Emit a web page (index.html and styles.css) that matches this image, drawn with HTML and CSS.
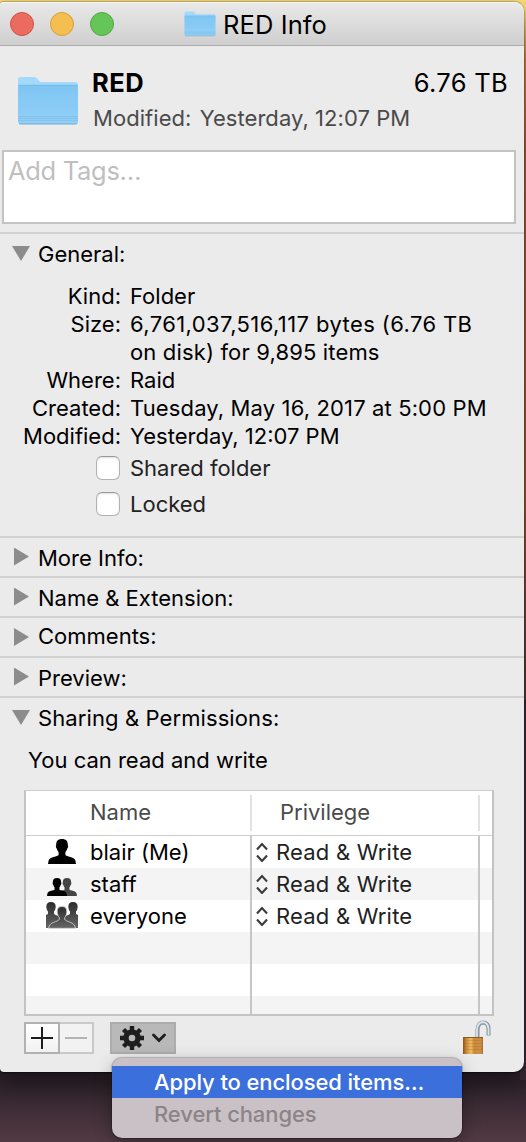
FILE: index.html
```
<!DOCTYPE html>
<html lang="en">
<head>
    <meta charset="UTF-8">
    <meta name="viewport" content="width=device-width, initial-scale=1.0">
    <title>RED Info</title>
    <link rel="stylesheet" href="styles.css">
</head>
<body>
    <!-- shared icons -->
    <svg class="sprite" width="0" height="0">
        <defs>
            <linearGradient id="folderFront" x1="0" y1="0" x2="0" y2="1">
                <stop offset="0" stop-color="#7fc5f3"/>
                <stop offset="1" stop-color="#92d0f8"/>
            </linearGradient>
            <linearGradient id="crowdFill" x1="0" y1="0" x2="0" y2="1">
                <stop offset="0" stop-color="#2c2c2c"/>
                <stop offset="1" stop-color="#666"/>
            </linearGradient>
            <linearGradient id="lockBody" x1="0" y1="0" x2="1" y2="0">
                <stop offset="0" stop-color="#8a4f16"/>
                <stop offset="0.15" stop-color="#c98432"/>
                <stop offset="0.4" stop-color="#efbd68"/>
                <stop offset="0.55" stop-color="#c88a3a"/>
                <stop offset="0.9" stop-color="#cf8f42"/>
                <stop offset="1" stop-color="#a5672a"/>
            </linearGradient>
            <symbol id="folder" viewBox="0 0 62 50">
                <path d="M1 4Q1 1 4 1H17Q19 1 20.500 3L23 6H58Q61 6 61 9V20H1Z" fill="#a3d9fb"/>
                <path d="M1 11Q1 9 3 9H59Q61 9 61 11V45Q61 48 58 48H4Q1 48 1 45Z" fill="url(#folderFront)"/>
                <path d="M1.500 9.300H60.500" stroke="#74b5e2" stroke-width="0.800"/>
                <path d="M1 40.500H61M1 42.500H61M1 44.500H61" stroke="#7ab9e2" stroke-width="0.600"/>
                <path d="M2 47.600Q3 48 4 48H58Q60 48 60.500 47" stroke="#6fa9cf" fill="none"/>
            </symbol>
            <symbol id="person" viewBox="0 0 28 25">
                <path d="M14 0C10 0 8 2 8.200 6C7.600 6.300 7.900 9.500 8.900 9.700C9.300 11.400 10 12.400 10.600 13V16C10 17.600 1.500 17.700 .6 21.500L0 25H28L27.400 21.500C26.500 17.700 18 17.600 17.400 16V13C18 12.400 18.700 11.400 19.100 9.700C20.100 9.500 20.400 6.300 19.800 6C20 2 18 0 14 0Z"/>
            </symbol>
            <symbol id="updown" viewBox="0 0 12 20">
                <path d="M1 7.500L6 2L11 7.500M1 13.500L6 19L11 13.500" fill="none" stroke="#3c3c3c" stroke-width="2.100"/>
            </symbol>
        </defs>
    </svg>

    <div class="window">
        <header class="titlebar">
            <div class="lights">
                <span class="light red"></span>
                <span class="light yellow"></span>
                <span class="light green"></span>
            </div>
            <svg class="title-folder" width="32" height="26"><use href="#folder"/></svg>
            <h1>RED Info</h1>
        </header>

        <div class="summary">
            <svg class="big-folder" width="62" height="50"><use href="#folder"/></svg>
            <div class="summary-text">
                <div class="name-row">
                    <strong>RED</strong>
                    <span class="total">6.76 TB</span>
                </div>
                <div class="modified">Modified: <span class="date">Yesterday, 12:07 PM</span></div>
            </div>
        </div>

        <div class="tags">Add Tags…</div>

        <section class="general">
            <h2 class="open">General:</h2>
            <dl>
                <dt>Kind:</dt><dd>Folder</dd>
                <dt>Size:</dt><dd><span class="bytes">6,761,037,516,117 bytes (6.76 TB</span><br><span class="items">on disk) for 9,895 items</span></dd>
                <dt>Where:</dt><dd>Raid</dd>
                <dt>Created:</dt><dd class="created">Tuesday, May 16, 2017 at 5:00 PM</dd>
                <dt>Modified:</dt><dd>Yesterday, 12:07 PM</dd>
            </dl>
            <div class="check"><span class="box"></span>Shared folder</div>
            <div class="check"><span class="box"></span>Locked</div>
        </section>
        <section class="closed"><h2>More Info:</h2></section>
        <section class="closed"><h2>Name &amp; Extension:</h2></section>
        <section class="closed comments"><h2>Comments:</h2></section>
        <section class="closed"><h2>Preview:</h2></section>

        <section class="sharing">
            <h2 class="open">Sharing &amp; Permissions:</h2>
            <p>You can read and write</p>
            <div class="table">
                <div class="row head">
                    <div class="cell name">Name</div>
                    <div class="cell priv">Privilege</div>
                    <div class="cell"></div>
                </div>
                <div class="row">
                    <div class="cell name">
                        <svg class="who" width="32" height="28"><use href="#person" x="2" y="1" width="28" height="25"/></svg>
                        blair (Me)
                    </div>
                    <div class="cell priv"><svg width="12" height="20"><use href="#updown"/></svg>Read &amp; Write</div>
                    <div class="cell"></div>
                </div>
                <div class="row">
                    <div class="cell name">
                        <svg class="who" width="32" height="28">
                            <use href="#person" x="11" y="8" width="20" height="18" fill="#444"/>
                            <use href="#person" x="1" y="8" width="20" height="18"/>
                        </svg>
                        staff
                    </div>
                    <div class="cell priv"><svg width="12" height="20"><use href="#updown"/></svg>Read &amp; Write</div>
                    <div class="cell"></div>
                </div>
                <div class="row">
                    <div class="cell name">
                        <svg class="who" width="32" height="28">
                            <g fill="url(#crowdFill)">
                                <path d="M5 0Q9.800 0 9.700 5Q9.500 8 8 9.500V12Q10 13.500 13 14V26H0V13L2 12V9.500Q.5 8 .3 5Q.3 0 5 0Z"/>
                                <path d="M27 0Q22.200 0 22.300 5Q22.500 8 24 9.500V12Q22 13.500 19 14V26H32V13L30 12V9.500Q31.500 8 31.700 5Q31.700 0 27 0Z"/>
                                <path d="M16 4.500C12.500 4.500 11 6.500 11.200 10C11.300 12 12 14 13.200 15.500V17.500C12 20 3.500 19.500 2.500 26.300H29.500C28.500 19.500 20 20 18.800 17.500V15.500C20 14 20.700 12 20.800 10C21 6.500 19.500 4.500 16 4.500Z" stroke="#d8d8d8" stroke-width="0.800"/>
                            </g>
                        </svg>
                        everyone
                    </div>
                    <div class="cell priv"><svg width="12" height="20"><use href="#updown"/></svg>Read &amp; Write</div>
                    <div class="cell"></div>
                </div>
                <div class="row"><div class="cell"></div><div class="cell"></div><div class="cell"></div></div>
                <div class="row"><div class="cell"></div><div class="cell"></div><div class="cell"></div></div>
                <div class="row last"><div class="cell"></div><div class="cell"></div><div class="cell"></div></div>
            </div>

            <div class="toolbar">
                <div class="btn add"><svg width="22" height="22"><path d="M0 11H22M11 0V22" stroke="#1c1c1c" stroke-width="2"/></svg></div>
                <div class="btn remove"><svg width="22" height="22"><path d="M0 11H22" stroke="#b4b4b4" stroke-width="2"/></svg></div>
                <div class="btn action">
                    <svg width="24" height="24" viewBox="-12 -12 24 24">
                        <circle r="6" fill="none" stroke="#1e1e1e" stroke-width="5.400"/>
                        <g stroke="#1e1e1e" stroke-width="4.400">
                            <path d="M0 -12V-7M0 12V7M-12 0H-7M12 0H7"/>
                            <path d="M-8.500 -8.500L-5 -5M8.500 8.500L5 5M-8.500 8.500L-5 5M8.500 -8.500L5 -5"/>
                        </g>
                    </svg>
                    <svg width="14" height="10"><path d="M1.500 2L7 7.500L12.500 2" fill="none" stroke="#1e1e1e" stroke-width="2.800" stroke-linecap="round"/></svg>
                    <div class="menu">
                        <div class="item selected">Apply to enclosed items…</div>
                        <div class="item disabled">Revert changes</div>
                    </div>
                </div>
                <svg class="lock" width="28" height="35">
                    <path d="M14.500 18V9.500Q15 2.500 20.500 2.500Q25.500 3 25.500 9V15.500" fill="none" stroke="#8495a0" stroke-width="4"/>
                    <path d="M14 18V9.500Q14.500 2.500 20 2Q25 2.500 25.500 9V15" fill="none" stroke="#dce5ea" stroke-width="1.800"/>
                    <rect x="0" y="17" width="20" height="17" fill="url(#lockBody)"/>
                    <path d="M1 20.500H19M1 23.500H19M1 26.500H19M1 29.500H19" stroke="#a66a25" stroke-width="0.300"/>
                    <path d="M0 17.500H20" stroke="#8d5a20"/>
                </svg>
            </div>
        </section>
    </div>
</body>
</html>
```

FILE: styles.css
```
body {
    font-family: Inter, "Liberation Sans", sans-serif;
    font-size: 22px;
    line-height: 28px;
    margin: 0;
    color: #000;
    height: 1142px;
    overflow: hidden;
    background: linear-gradient(to right, transparent 520px, #3a2a36 520px) 0 700px / 526px 380px no-repeat,
        linear-gradient(to bottom, #f3d972 0, #e8c765 20px, #c97a3a 60px, #a35a30 150px, #96522f 500px, #3a2a36 760px, #2c2129 1080px, #523a44 1142px);
}
h1, h2, p, dl, dd {
    margin: 0;
    font-weight: normal;
    font-size: inherit;
}
.sprite {
    display: block;
}
.window {
    box-sizing: border-box;
    width: 524px;
    height: 1071px;
    margin-top: 1px;
    background-color: #ebebeb;
    border-top: 1px solid #b9a566;
    border-radius: 4px 10px 10px 4px;
    box-shadow: 0 1px 2px rgba(0, 0, 0, 0.6), 0 14px 20px rgba(0, 0, 0, 0.3);
}

/* title bar */
.titlebar {
    box-sizing: border-box;
    display: flex;
    align-items: center;
    height: 44px;
    padding-left: 10px;
    border-bottom: 1px solid #acacac;
    border-radius: 4px 10px 0 0;
    background: linear-gradient(#e9e9e9, #cfcfcf);
    box-shadow: inset 0 1px #f5f5f5;
}
.lights {
    display: flex;
    gap: 16px;
}
.light {
    box-sizing: border-box;
    width: 24px;
    height: 24px;
    border-radius: 50%;
    border: 1px solid;
}
.red {
    background-color: #ec6b60;
    border-color: #cf5148;
}
.yellow {
    background-color: #f4bf50;
    border-color: #d79f3b;
}
.green {
    background-color: #66c558;
    border-color: #50a73f;
}
.title-folder {
    margin: 1px 0 0 70px;
}
.titlebar h1 {
    margin: 3px 0 0 7px;
    font-size: 25.5px;
    letter-spacing: 0.1px;
}

/* name, size and date */
.summary {
    display: flex;
    height: 104px;
    padding: 0 16px 0 17px;
}
.big-folder {
    margin-top: 30px;
}
.summary-text {
    flex: 1;
    margin: 23px 0 0 13px;
}
.name-row {
    display: flex;
    justify-content: space-between;
    font-size: 25.5px;
}
.name-row strong {
    letter-spacing: 0.5px;
}
.total {
    letter-spacing: 0.3px;
}
.modified {
    margin: 7px 0 0 1px;
    color: #4a4a4a;
    letter-spacing: 0.05px;
}
.date {
    margin-left: 2px;
}
.tags {
    box-sizing: border-box;
    width: 514px;
    height: 74px;
    margin: 0 0 8px 2px;
    padding: 5px 4px;
    border: 2px solid #c3c3c3;
    background-color: #fff;
    color: #bfbfbf;
    font-size: 25.5px;
    letter-spacing: -0.3px;
}

/* sections */
section {
    box-sizing: border-box;
    border-top: 2px solid #d2d2d2;
}
h2 {
    display: flex;
    align-items: center;
    height: 38px;
    padding-top: 1px;
    box-sizing: border-box;
}
h2::before {
    content: "";
    width: 15px;
    height: 18px;
    margin: -2px 9px 0 14px;
    background-color: #8c8c8c;
    clip-path: polygon(0 0, 100% 50%, 0 100%);
}
h2.open::before {
    width: 18px;
    height: 15px;
    margin: -1px 8px 0 12px;
    clip-path: polygon(0 0, 100% 0, 50% 100%);
}
.closed {
    height: 40px;
}
.comments h2 {
    height: 35px;
}
.comments h2::before {
    margin-top: 2px;
}
.general {
    height: 304px;
}
.general h2 {
    height: 39px;
}
dl {
    display: grid;
    grid-template-columns: 121px 1fr;
    column-gap: 9px;
    margin: 9px 0 6px;
}
dt {
    text-align: right;
}
dd {
    white-space: nowrap;
}
.bytes {
    letter-spacing: 0.4px;
}
.items {
    letter-spacing: 0.15px;
}
.created {
    letter-spacing: 0.13px;
}
.check {
    display: flex;
    align-items: center;
    height: 24px;
    margin: 0 0 12px 96px;
    color: #222;
}
.box {
    box-sizing: border-box;
    width: 24px;
    height: 24px;
    margin-right: 10px;
    border: 1px solid #b2b2b2;
    border-top-color: #989898;
    border-radius: 6px;
    background-color: #fff;
    box-shadow: inset 0 1px 2px rgba(0, 0, 0, 0.12);
}

/* sharing table */
.sharing h2 {
    height: 39px;
    letter-spacing: 0.1px;
}
.sharing p {
    margin: 9px 0 16px 28px;
}
.table {
    box-sizing: border-box;
    width: 470px;
    height: 226px;
    margin-left: 24px;
    overflow: hidden;
    border: 2px solid #c3c3c3;
    border-top: 1px solid #cdcdcd;
    background-color: #fff;
}
.row {
    display: grid;
    grid-template-columns: 226px 228px 12px;
    height: 32px;
}
.row:nth-child(odd) {
    background-color: #f4f4f4;
}
.cell {
    box-sizing: border-box;
    display: flex;
    align-items: center;
    border-right: 2px solid #c6c6c6;
    white-space: nowrap;
}
.row .cell:last-child {
    border-right: 0;
}
.row.head {
    height: 45px;
    box-sizing: border-box;
    padding: 4px 0;
    border-bottom: 1px solid #cdcdcd;
    background-color: #fff;
    color: #4a4a4a;
}
.head .cell {
    padding-bottom: 2px;
    border-color: #e2e2e2;
}
.head .name {
    padding-left: 64px;
}
.head .priv {
    padding-left: 28px;
}
.who {
    margin: 0 12px 0 20px;
}
.priv svg {
    margin: 0 8px 0 4px;
}
.row:not(.head) .priv {
    color: #222;
    letter-spacing: 0.2px;
}

/* buttons under the table */
.toolbar {
    display: flex;
    height: 38px;
    margin: 4px 0 0 24px;
}
.btn {
    box-sizing: border-box;
    display: flex;
    align-items: center;
    justify-content: center;
    height: 32px;
    margin-top: 2px;
    border: 2px solid #b1b1b1;
}
.add {
    width: 36px;
    background: linear-gradient(#fff, #f2f2f2);
}
.remove {
    width: 34px;
    border-color: #c9c9c9;
    border-left: 0;
    background-color: #f2f2f2;
}
.action {
    position: relative;
    width: 66px;
    margin-left: 16px;
    gap: 8px;
    background-color: #b9b9b9;
    border-color: #adadad;
}
.lock {
    margin-left: 287px;
}
.menu {
    position: absolute;
    top: 34px;
    left: 0;
    box-sizing: border-box;
    width: 350px;
    height: 80px;
    padding-top: 8px;
    border-radius: 10px;
    background-color: #c9c1c5;
    box-shadow: 0 0 1px 1px rgba(0, 0, 0, 0.22), 0 6px 18px rgba(0, 0, 0, 0.3);
}
.item {
    height: 32px;
    padding-left: 42px;
    line-height: 33px;
    letter-spacing: -0.1px;
}
.selected {
    background-color: #3b6fdc;
    color: #fff;
    font-weight: 500;
}
.disabled {
    color: #8c8488;
    font-weight: 500;
}
```
